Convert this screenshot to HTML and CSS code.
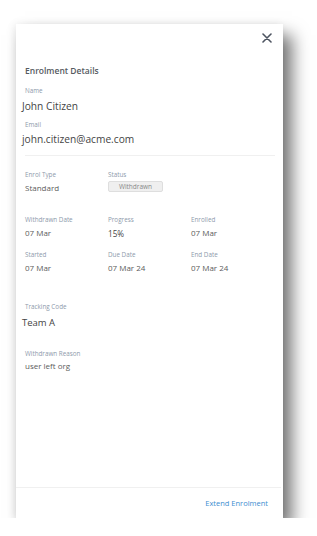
FILE: index.html
```html
<!DOCTYPE html>
<html lang="en">

<head>
    <meta charset="UTF-8">
    <meta name="viewport" content="width=device-width, initial-scale=1.0">
    <title>Enrolment Details</title>
    <link rel="stylesheet" href="styles.css">
</head>

<body>
    <div class="panel">
        <div class="panel-top">
            <button class="close" aria-label="Close">
                <svg width="10" height="10" viewBox="0 0 10 10">
                    <path d="M1 1 L9 9 M9 1 L1 9" stroke="#4d5460" stroke-width="1.6" stroke-linecap="round" />
                </svg>
            </button>
        </div>
        <div class="panel-body">
            <h2 class="title">Enrolment Details</h2>
            <div class="field name">
                <div class="label">Name</div>
                <div class="value big shift">John Citizen</div>
            </div>
            <div class="field email">
                <div class="label">Email</div>
                <div class="value big shift">john.citizen@acme.com</div>
            </div>
            <hr class="divider">
            <div class="grid">
                <div class="field">
                    <div class="label">Enrol Type</div>
                    <div class="value">Standard</div>
                </div>
                <div class="field">
                    <div class="label">Status</div>
                    <span class="badge">Withdrawn</span>
                </div>
                <div></div>
            </div>
            <div class="grid dates">
                <div class="field">
                    <div class="label">Withdrawn Date</div>
                    <div class="value">07 Mar</div>
                </div>
                <div class="field">
                    <div class="label">Progress</div>
                    <div class="value progress">15%</div>
                </div>
                <div class="field">
                    <div class="label">Enrolled</div>
                    <div class="value">07 Mar</div>
                </div>
                <div class="field">
                    <div class="label">Started</div>
                    <div class="value">07 Mar</div>
                </div>
                <div class="field">
                    <div class="label">Due Date</div>
                    <div class="value">07 Mar 24</div>
                </div>
                <div class="field">
                    <div class="label">End Date</div>
                    <div class="value">07 Mar 24</div>
                </div>
            </div>
            <div class="field tracking">
                <div class="label">Tracking Code</div>
                <div class="value mid shift">Team A</div>
            </div>
            <div class="field reason">
                <div class="label">Withdrawn Reason</div>
                <div class="value">user left org</div>
            </div>
        </div>
        <div class="panel-footer">
            <a class="link" href="#">Extend Enrolment</a>
        </div>
    </div>
</body>

</html>
```

FILE: styles.css
```css
body {
    margin: 0;
    padding: 24px 0 0 16px;
    background: #fff;
    font-family: "Open Sans", "Liberation Sans", sans-serif;
    color: #555;
}

.panel {
    width: 267px;
    height: 494px;
    background: #fff;
    display: flex;
    flex-direction: column;
    box-shadow: 9px 11px 16px rgba(0, 0, 0, 0.55), -2px 0 8px rgba(0, 0, 0, 0.07);
}

.panel-top {
    display: flex;
    justify-content: flex-end;
    padding: 9px 11px 0 0;
}

.close {
    border: none;
    background: none;
    padding: 0;
    width: 10px;
    height: 10px;
    display: flex;
    cursor: pointer;
}

.panel-body {
    flex: 1;
    padding: 0 8px 0 9px;
}

.title {
    margin: 22px 0 0;
    font-size: 8.5px;
    line-height: 12px;
    font-weight: 600;
    color: #555a60;
}

.field {
    display: flex;
    flex-direction: column;
}

.label {
    font-size: 6.3px;
    color: #8e9aab;
    line-height: 8px;
}

.value {
    font-size: 8px;
    color: #5c5c5c;
    line-height: 12px;
    margin-top: 3px;
}

.value.big {
    font-size: 10.2px;
    color: #444;
    line-height: 14px;
    margin-top: 4px;
}

.value.mid {
    font-size: 9.5px;
    color: #444;
    line-height: 14px;
    margin-top: 5px;
}

.shift {
    margin-left: -3px;
}

.name {
    margin-top: 10px;
}

.email {
    margin-top: 8px;
}

.email .value.big {
    margin-top: 3px;
}

.divider {
    border: none;
    border-top: 1px solid #f0f0f0;
    margin: 9px 0 0;
}

.grid {
    display: grid;
    grid-template-columns: 83px 83px 1fr;
    row-gap: 11px;
    margin-top: 15px;
}

.grid.dates {
    margin-top: 22px;
}

.badge {
    display: inline-block;
    width: 55px;
    height: 11px;
    margin-top: 2px;
    box-sizing: border-box;
    background: #efefef;
    border: 1px solid #dedede;
    border-radius: 2px;
    font-size: 6.5px;
    color: #888;
    text-align: center;
    line-height: 9px;
}

.value.progress {
    font-size: 8.2px;
    color: #444;
    margin-top: 4px;
}

.tracking {
    margin-top: 29px;
}

.reason {
    margin-top: 20px;
}

.reason .value {
    margin-top: 2px;
}

.panel-footer {
    border-top: 1px solid #f0f0f0;
    margin-right: 2px;
    height: 30px;
    display: flex;
    justify-content: flex-end;
    align-items: center;
    padding-right: 13px;
}

.link {
    font-size: 7.5px;
    color: #3c8dd0;
    text-decoration: none;
}
```
